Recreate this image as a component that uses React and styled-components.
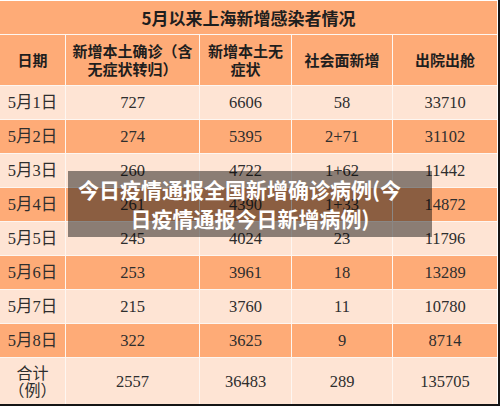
import styled, { createGlobalStyle } from "styled-components";

const GlobalStyle = createGlobalStyle`
  html, body {
    margin: 0;
    padding: 0;
    background: #ffffff;
  }
  body {
    width: 500px;
    height: 407px;
    overflow: hidden;
    font-family: "Liberation Serif", "Noto Sans CJK SC", serif;
  }
`;

const rows = [
  ["5月1日", "727", "6606", "58", "33710"],
  ["5月2日", "274", "5395", "2+71", "31102"],
  ["5月3日", "260", "4722", "1+62", "11442"],
  ["5月4日", "261", "4390", "1+33", "14872"],
  ["5月5日", "245", "4024", "23", "11796"],
  ["5月6日", "253", "3961", "18", "13289"],
  ["5月7日", "215", "3760", "11", "10780"],
  ["5月8日", "322", "3625", "9", "8714"],
];

const heads = ["日期", "新增本土确诊（含无症状转归）", "新增本土无症状", "社会面新增", "出院出舱"];

export default function App() {
  return (
    <Page>
      <GlobalStyle />
      <Frame>
        <Grid>
          <Title>5月以来上海新增感染者情况</Title>
          {heads.map((h) => (
            <Head key={h}>{h}</Head>
          ))}
          {rows.map((r, i) =>
            r.map((v, j) => (
              <Cell key={i + "-" + j} $dark={i % 2 === 1}>
                {v}
              </Cell>
            ))
          )}
          <Cell $label>合计（例）</Cell>
          <Cell>2557</Cell>
          <Cell>36483</Cell>
          <Cell>289</Cell>
          <Cell>135705</Cell>
        </Grid>
      </Frame>
      <Caption>
        <CaptionLine $shift>今日疫情通报全国新增确诊病例(今</CaptionLine>
        <CaptionLine>日疫情通报今日新增病例)</CaptionLine>
      </Caption>
    </Page>
  );
}

const Page = styled.div`
  position: relative;
  width: 500px;
  height: 407px;
  background: #ffffff;
`;

const Frame = styled.div`
  width: 500px;
  padding-top: 1px;
  background: #ffffff;
  border-right: 2px solid #151515;
  border-bottom: 2px solid #151515;
  box-sizing: border-box;
`;

const Grid = styled.div`
  display: grid;
  width: 497px;
  grid-template-columns: 65px 133px 91px 100px 104px;
  grid-template-rows: 33px 50px repeat(8, 33px) 46px;
  gap: 1px;
  background: #fdf6f1;
`;

const Title = styled.div`
  grid-column: 1 / -1;
  display: flex;
  align-items: center;
  justify-content: center;
  background: #feab77;
  color: #1e1e1e;
  font-family: "Noto Sans CJK SC", sans-serif;
  font-weight: 700;
  font-size: 17px;
  padding-bottom: 1px;
`;

const Head = styled.div`
  display: flex;
  align-items: center;
  justify-content: center;
  text-align: center;
  padding: 0 4px;
  background: #feab77;
  color: #1e1e1e;
  font-family: "Noto Sans CJK SC", sans-serif;
  font-weight: 700;
  font-size: 15px;
  line-height: 18px;
`;

const Cell = styled.div`
  display: flex;
  align-items: center;
  justify-content: center;
  text-align: center;
  padding: ${(p) => (p.$label ? "0 6px" : "0 2px")};
  background: ${(p) => (p.$dark ? "#feab77" : "#fee4d4")};
  color: #2e2e2e;
  font-family: ${(p) =>
    p.$label ? '"Noto Sans CJK SC", sans-serif' : '"Liberation Serif", "Noto Sans CJK SC", serif'};
  font-size: ${(p) => (p.$label ? "16px" : "16.5px")};
  line-height: 17px;
`;

const Caption = styled.div`
  position: absolute;
  left: 50%;
  top: 50%;
  transform: translate(-50%, -50%);
  width: 364px;
  height: 66px;
  display: flex;
  flex-direction: column;
  align-items: center;
  justify-content: center;
  background: rgba(0, 0, 0, 0.45);
  color: #ffffff;
  font-family: "Noto Sans CJK SC", sans-serif;
  font-weight: 700;
  font-size: 21px;
  line-height: 29px;
  white-space: nowrap;
`;

const CaptionLine = styled.span`
  display: block;
  margin-right: ${(p) => (p.$shift ? "21px" : "0")};
`;
